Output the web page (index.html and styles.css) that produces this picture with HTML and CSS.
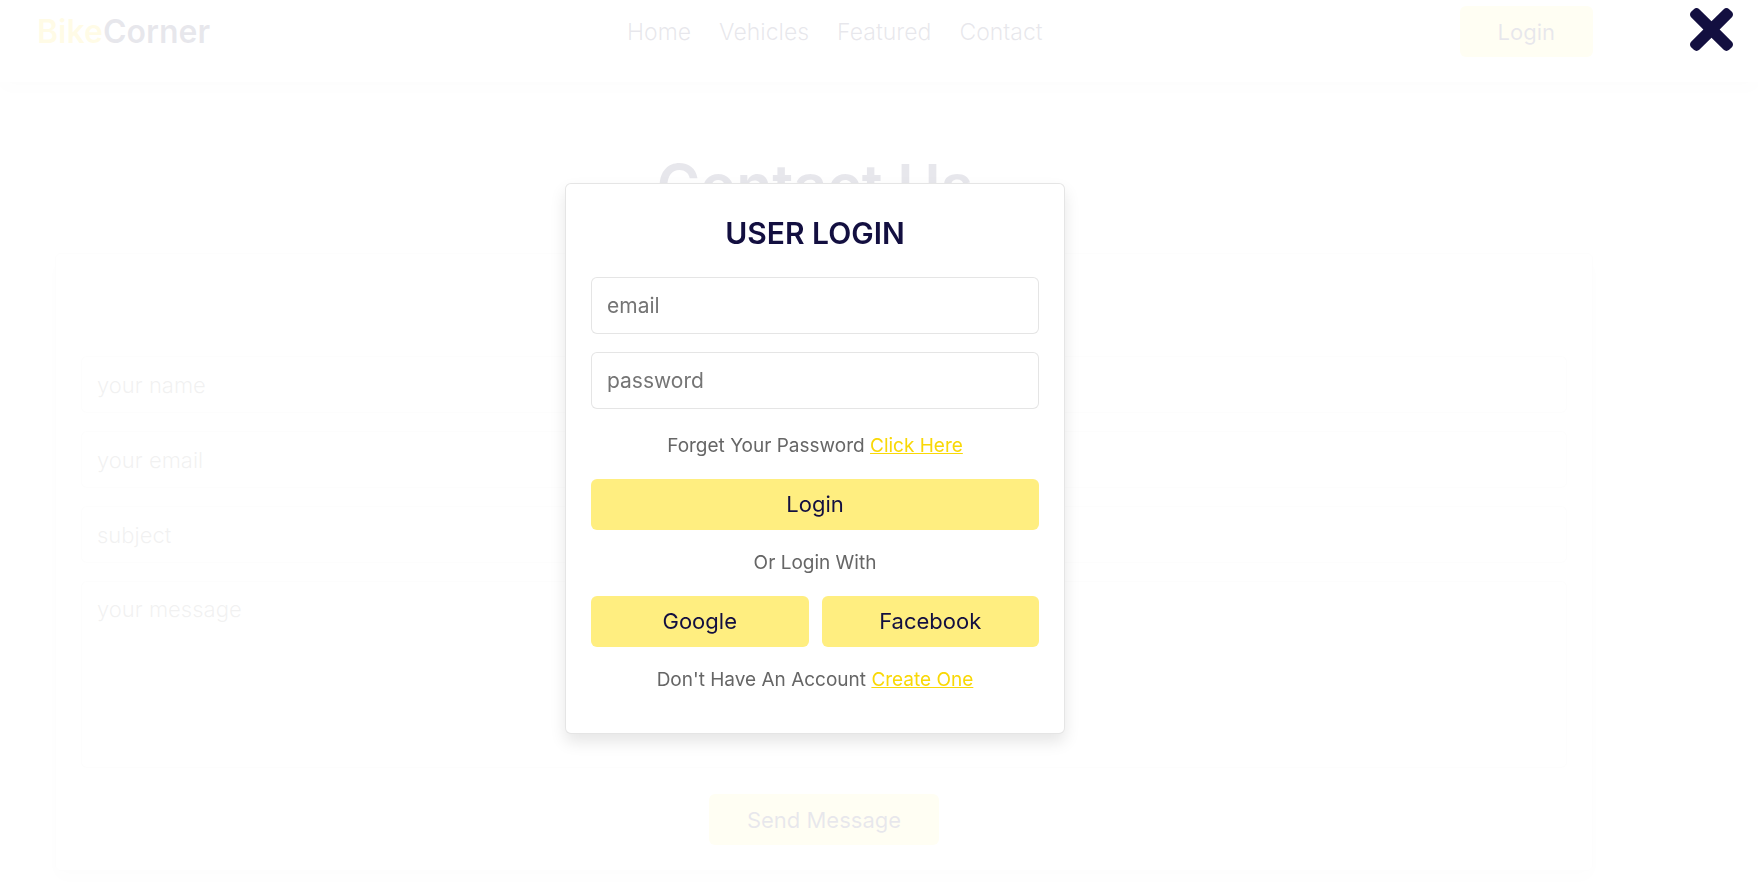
FILE: index.html
```html
<!DOCTYPE html>
<html lang="en">
<head>
<meta charset="utf-8">
<meta name="viewport" content="width=device-width, initial-scale=1">
<title>BikeCorner</title>
<link rel="stylesheet" href="styles.css">
</head>
<body>
<header class="header">
  <a href="#" class="logo"><span>Bike</span>Corner</a>
  <nav class="navbar">
    <a href="#home">Home</a>
    <a href="#vehicles">Vehicles</a>
    <a href="#featured">Featured</a>
    <a href="#contact">Contact</a>
  </nav>
  <button type="button" class="btn">Login</button>
</header>

<main class="contact" id="contact">
  <h1 class="heading">Contact Us</h1>
  <form class="contact-form">
    <input class="field" type="text" placeholder="your name" aria-label="your name">
    <input class="field" type="email" placeholder="your email" aria-label="your email">
    <input class="field" type="text" placeholder="subject" aria-label="subject">
    <textarea class="field message" placeholder="your message" aria-label="your message"></textarea>
    <button type="submit" class="btn send">Send Message</button>
  </form>
</main>

<div class="overlay">
  <button type="button" class="close" aria-label="Close">
    <svg viewBox="0 80 352 352" aria-hidden="true"><path fill="currentColor" d="M242.72 256l100.07-100.07c12.28-12.28 12.28-32.19 0-44.48l-22.24-22.24c-12.28-12.28-32.19-12.28-44.48 0L176 189.28 75.93 89.21c-12.28-12.28-32.19-12.28-44.48 0L9.21 111.45c-12.28 12.28-12.28 32.19 0 44.48L109.28 256 9.21 356.07c-12.28 12.28-12.28 32.19 0 44.48l22.24 22.24c12.28 12.28 32.2 12.28 44.48 0L176 322.72l100.07 100.07c12.28 12.28 32.2 12.28 44.48 0l22.24-22.24c12.28-12.28 12.28-32.19 0-44.48L242.72 256z"/></svg>
  </button>
  <form class="login-form">
    <h2 class="title">USER LOGIN</h2>
    <input class="field" type="email" placeholder="email" aria-label="email">
    <input class="field" type="password" placeholder="password" aria-label="password">
    <p>Forget Your Password <a href="#">Click Here</a></p>
    <button type="submit" class="btn">Login</button>
    <p>Or Login With</p>
    <div class="buttons">
      <button type="button" class="btn">Google</button>
      <button type="button" class="btn">Facebook</button>
    </div>
    <p>Don't Have An Account <a href="#">Create One</a></p>
  </form>
</div>
</body>
</html>
```
FILE: styles.css
```css
:root {
  --yellow: #f9d806;
  --light-yellow: #ffee80;
  --black: #130f40;
  --light: #666;
  --border: 1px solid rgba(0, 0, 0, 0.1);
  --shadow: 0 8px 16px rgba(0, 0, 0, 0.1);
}

* {
  box-sizing: border-box;
  margin: 0;
  padding: 0;
}

body {
  font-family: Inter, "Open Sans", sans-serif;
  background: #fff;
  color: var(--black);
  overflow: hidden;
}

a {
  text-decoration: none;
  color: inherit;
}

.header {
  display: flex;
  align-items: center;
  justify-content: space-between;
  padding: 6px 165px 25px 37px;
  box-shadow: var(--shadow);
}

.logo {
  font-size: 32px;
  line-height: 40px;
  font-weight: 600;
}

.logo span {
  color: var(--yellow);
}

.navbar {
  display: flex;
  gap: 28px;
  font-size: 23px;
  line-height: 30px;
  font-weight: 300;
}

.btn {
  height: 51px;
  padding: 0 38px;
  border: 0;
  border-radius: 6px;
  background: var(--light-yellow);
  color: var(--black);
  font-family: inherit;
  font-size: 22px;
  cursor: pointer;
}

.contact {
  padding: 69px 165px 20px 37px;
}

.heading {
  font-size: 59px;
  line-height: 70px;
  font-weight: 600;
  text-align: center;
}

.contact-form {
  display: flex;
  flex-direction: column;
  gap: 18px;
  margin: 32px 0 0 18px;
  padding: 102px 25px 25px;
  border: var(--border);
  border-radius: 6px;
  box-shadow: var(--shadow);
}

.field {
  width: 100%;
  height: 57px;
  padding: 0 15px;
  border: var(--border);
  border-radius: 6px;
  background: #fff;
  color: var(--black);
  font-family: inherit;
  font-size: 22px;
}

.field::placeholder {
  color: #757575;
}

.contact-form .field {
  font-weight: 300;
}

.contact-form .message {
  height: 187px;
  padding: 14px 15px;
  resize: none;
}

.send {
  align-self: center;
  margin-top: 8px;
}

.overlay {
  position: fixed;
  inset: 0;
  display: flex;
  align-items: center;
  justify-content: center;
  padding: 24px 128px 0 0;
  background: rgba(255, 255, 255, 0.9);
}

.close {
  position: absolute;
  top: 8px;
  right: 25px;
  width: 43px;
  height: 43px;
  border: 0;
  background: none;
  color: var(--black);
  cursor: pointer;
}

.close svg {
  display: block;
  width: 100%;
}

.login-form {
  width: 500px;
  padding: 25px 25px 20px;
  border: var(--border);
  border-radius: 6px;
  background: #fff;
  box-shadow: var(--shadow);
  text-align: center;
}

.title {
  margin-bottom: 20px;
  font-size: 30px;
  line-height: 48px;
  font-weight: 600;
}

.login-form .field {
  display: block;
  margin-bottom: 18px;
  font-size: 21px;
}

.login-form p {
  padding: 19px 0;
  color: var(--light);
  font-size: 19px;
  line-height: 28px;
}

.login-form .field + p {
  padding-top: 5px;
}

.login-form p a {
  color: var(--yellow);
  text-decoration: underline;
}

.login-form .btn {
  display: block;
  width: 100%;
  padding: 0;
}

.buttons {
  display: flex;
  gap: 13px;
}
```
